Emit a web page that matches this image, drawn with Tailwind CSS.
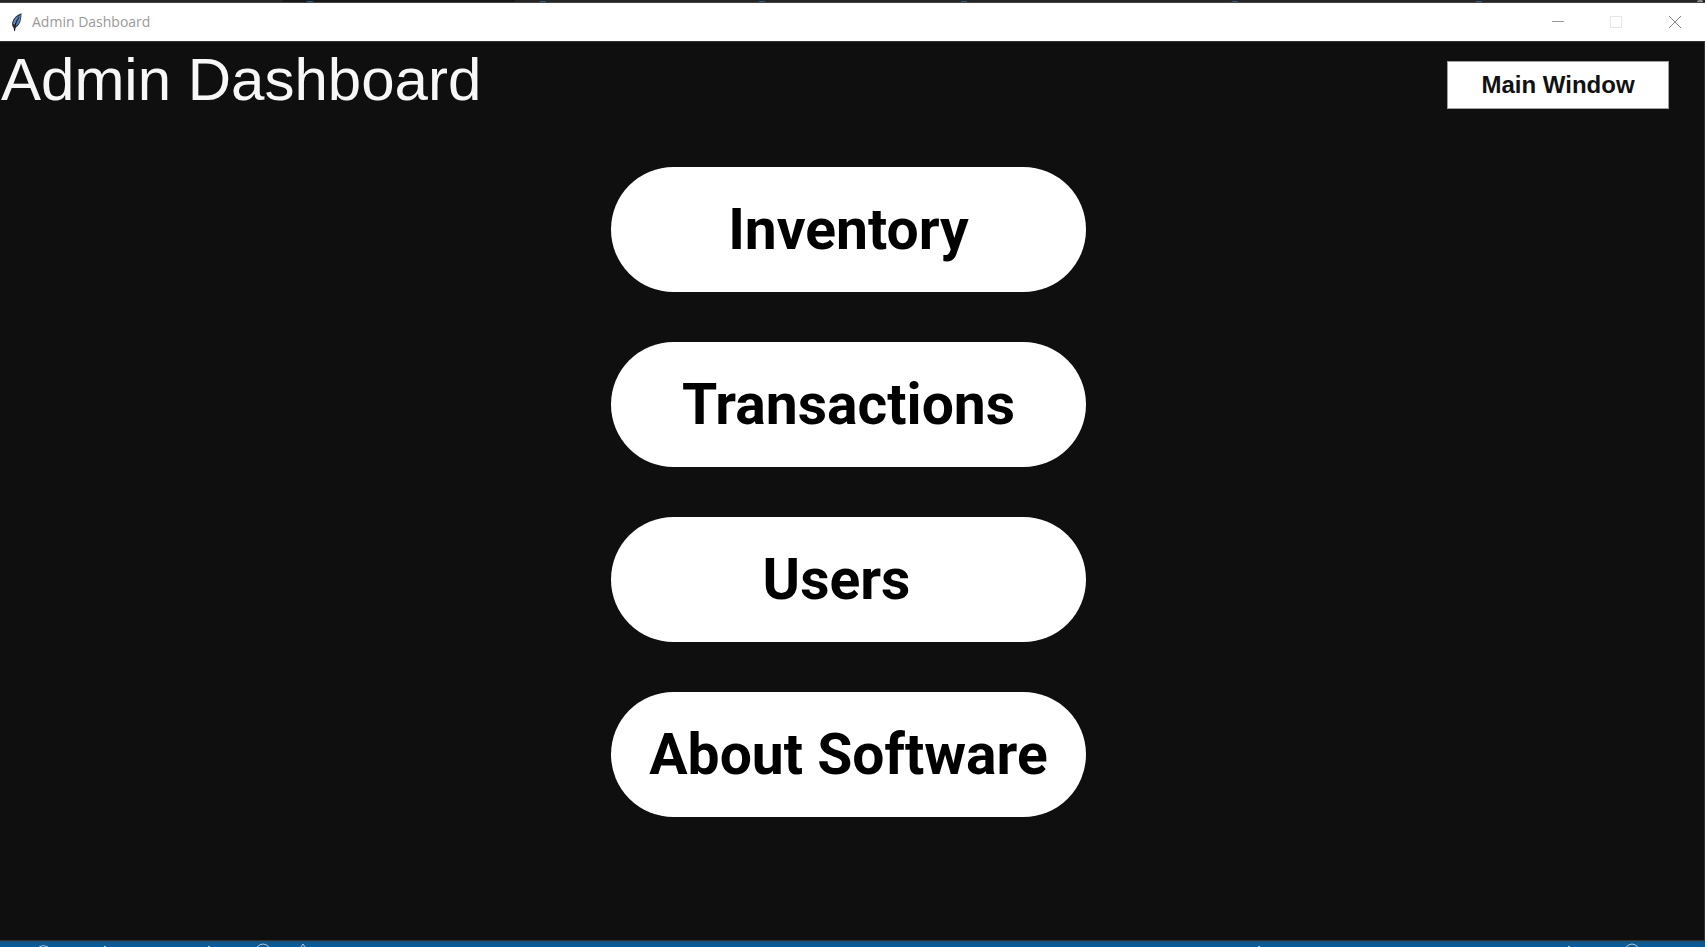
<!DOCTYPE html>
<html lang="en">
<head>
<meta charset="utf-8">
<title>Admin Dashboard</title>
<script src="https://cdn.jsdelivr.net/npm/@tailwindcss/browser@4"></script>
</head>
<body class="flex h-screen flex-col overflow-hidden bg-[#0f0f0f]">
  <!-- sliver of the window behind -->
  <div class="flex h-[3px] shrink-0 justify-between border-b border-[#444444] bg-[#252526]" aria-hidden="true">
    <svg class="h-[2px]" width="1600" height="2">
      <rect x="283" width="232" height="2" fill="#181818"/>
      <g fill="#2f5f8a">
        <path d="M306 2l2-1h4l2 1zM539 2l2-1h4l2 1zM758 2l2-1h4l2 1zM960 2l2-1h4l2 1zM1231 2l2-1h4l2 1zM1475 2l2-1h4l2 1z"/>
      </g>
    </svg>
    <svg class="h-[2px]" width="60" height="2"><path d="M52 2V1l2-1h3l1 1v1z" fill="#8a8a8a"/></svg>
  </div>

  <header class="flex h-[38px] shrink-0 items-center bg-white">
    <svg class="ml-2.5 mr-1 h-5 w-[18px]" viewBox="0 0 18 20" aria-hidden="true">
      <path d="M11.600 1.300C7.500 2.200 3.300 6.300 2.200 10.500c-.5 2 .1 4.200 1.400 5.200l.5 3.500 1-.2.2-3c2.700-1.500 4.900-4.500 5.500-8 .4-2.300.8-4.500.8-6.700z" fill="#30353d"/>
      <path d="M11 2.200C8.600 4 7 6.500 6.300 9.500l-1 5c2.700-1.500 4.300-4.300 4.800-7.200z" fill="#4f88cc"/>
      <path d="M8.500 3.800C5.200 6 3.400 9 3.100 12l1.400.6z" fill="#6f8fb5"/>
      <path d="M9 5.500C7 8 5.200 12 4.500 18" fill="none" stroke="#16181c" stroke-width="1"/>
    </svg>
    <span class="font-['Open_Sans','Noto_Sans',sans-serif] text-sm leading-5 text-[#999999]">Admin Dashboard</span>
    <div class="ml-auto flex h-full">
      <button type="button" aria-label="Minimize" class="flex w-[58px] items-center justify-center">
        <svg width="12" height="12"><path d="M0 5.500h12" stroke="#999999"/></svg>
      </button>
      <button type="button" aria-label="Maximize" disabled class="flex w-[58px] items-center justify-center">
        <svg width="12" height="12"><path d="M.5.5h11v11H.5z" fill="none" stroke="#e6e6e6"/></svg>
      </button>
      <button type="button" aria-label="Close" class="flex w-[60px] items-center justify-center">
        <svg width="12" height="12"><path d="M0 0l12 12M12 0L0 12" stroke="#888888"/></svg>
      </button>
    </div>
  </header>

  <main class="min-h-0 flex-1 border-t border-r border-b border-[#333333] bg-[#0f0f0f]">
    <div class="flex items-start justify-between pr-[35px] pl-px">
      <h1 class="pt-1 font-['Liberation_Sans',Arial,sans-serif] text-6xl leading-[68px] text-[#f7f7f7]">Admin Dashboard</h1>
      <button type="button" class="mt-[19px] h-12 w-[222px] border border-[#a0a0a0] bg-white font-['Liberation_Sans',Arial,sans-serif] text-2xl font-bold text-[#111111]">Main Window</button>
    </div>
    <nav class="flex flex-col items-center gap-[50px] pt-[53px] pr-[7px] font-['Roboto',sans-serif] text-[57px] leading-[64px] font-bold text-black">
      <button type="button" class="h-[125px] w-[475px] rounded-full bg-white">Inventory</button>
      <button type="button" class="h-[125px] w-[475px] rounded-full bg-white">Transactions</button>
      <button type="button" class="h-[125px] w-[475px] rounded-full bg-white pr-6">Users</button>
      <button type="button" class="h-[125px] w-[475px] rounded-full bg-white">About Software</button>
    </nav>
  </main>

  <!-- top edge of the status bar behind the window -->
  <div class="flex h-1.5 shrink-0 justify-between bg-linear-to-b from-[#15507c] to-[#0060a5]" aria-hidden="true">
    <svg width="340" height="6" fill="none" stroke="#b9c7d3">
      <path d="M39 6q4-3 9 0M104 5.500h2M208 5.500h2M257 6q6-6 12 0M301 6l2-3 2 3"/>
    </svg>
    <svg width="485" height="6" fill="none" stroke="#b9c7d3">
      <path d="M38 5.500h2M348 5.500h2M406 6q6-6 12 0"/>
    </svg>
  </div>
</body>
</html>
